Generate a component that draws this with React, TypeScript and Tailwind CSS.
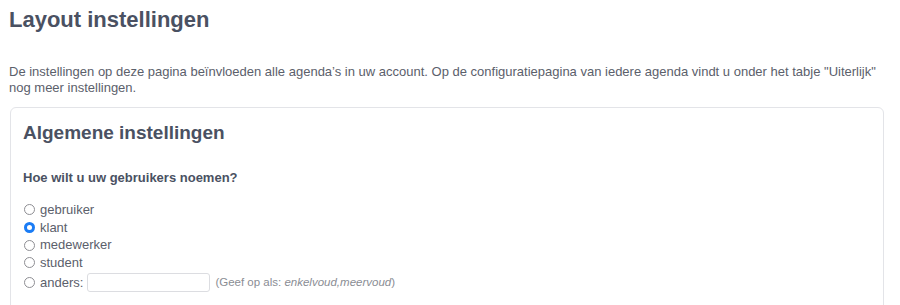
import React, { useState } from "react";

const options = ["gebruiker", "klant", "medewerker", "student"];

function Radio({ checked, onClick }: { checked: boolean; onClick: () => void }) {
    return (
        <span
            onClick={onClick}
            className={
                checked
                    ? "flex h-[11px] w-[11px] shrink-0 items-center justify-center rounded-full bg-[#1a7cf5]"
                    : "flex h-[11px] w-[11px] shrink-0 items-center justify-center rounded-full border border-[#8e8e93] bg-white"
            }
        >
            {checked && <span className="h-[5px] w-[5px] rounded-full bg-white" />}
        </span>
    );
}

export default function App() {
    const [selected, setSelected] = useState("klant");
    const [other, setOther] = useState("");

    return (
        <div className="h-[305px] overflow-hidden bg-white pl-[9px] pr-[16px] pt-[6px] font-['Liberation_Sans',Arial,sans-serif] text-[#5b606b]">
            <h1 className="text-[22px] font-bold leading-[28px] text-[#4a5162]">Layout instellingen</h1>

            <p className="mt-[30px] text-[13px] leading-[16px]">
                De instellingen op deze pagina beïnvloeden alle agenda’s in uw account. Op de configuratiepagina van iedere agenda vindt u onder het tabje "Uiterlijk" nog meer instellingen.
            </p>

            <div className="mt-[11px] ml-px rounded-[6px] border border-[#e3e4e8] px-[12px] pt-[13px] pb-[40px]">
                <h2 className="text-[19px] font-bold leading-[24px] text-[#4a5162]">Algemene instellingen</h2>

                <h3 className="mt-[25px] text-[13px] font-bold leading-[16px] text-[#4a5162]">Hoe wilt u uw gebruikers noemen?</h3>

                <div className="mt-[15px] flex flex-col">
                    {options.map((opt) => (
                        <label key={opt} className="flex h-[17.7px] items-center gap-[5px] pl-px text-[13px]" onClick={() => setSelected(opt)}>
                            <Radio checked={selected === opt} onClick={() => setSelected(opt)} />
                            <span>{opt}</span>
                        </label>
                    ))}
                    <div className="mt-px flex h-[19px] items-center gap-[5px] pl-px text-[13px]">
                        <Radio checked={selected === "anders"} onClick={() => setSelected("anders")} />
                        <span>anders:</span>
                        <input
                            value={other}
                            onChange={(e) => setOther(e.target.value)}
                            onFocus={() => setSelected("anders")}
                            className="-ml-px h-[19px] w-[123px] rounded-[3px] border border-[#dcdde1] bg-white px-1 text-[12px] outline-none"
                        />
                        <span className="text-[11.5px] text-[#8a8d94]">
                            (Geef op als: <i>enkelvoud,meervoud</i>)
                        </span>
                    </div>
                </div>
            </div>
        </div>
    );
}
